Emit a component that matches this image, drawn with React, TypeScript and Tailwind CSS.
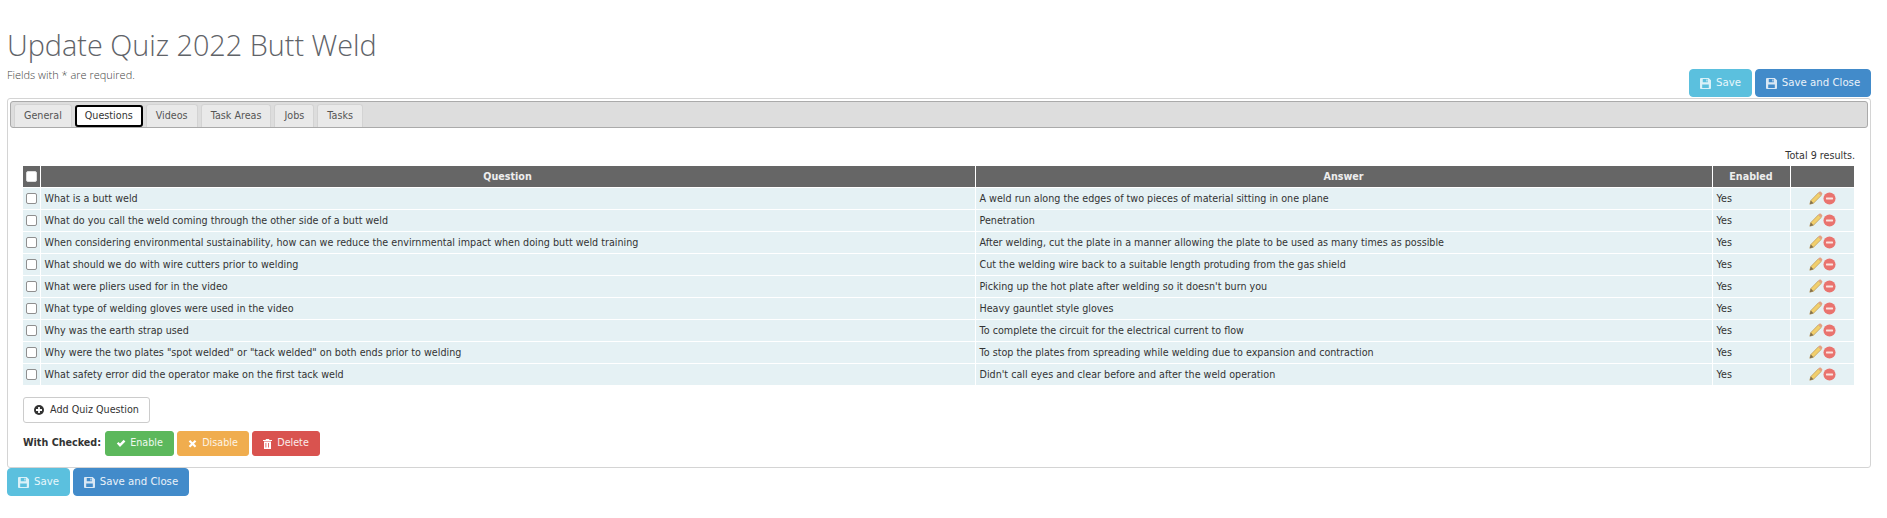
import React from "react";

const questions = [
  ["What is a butt weld", "A weld run along the edges of two pieces of material sitting in one plane"],
  ["What do you call the weld coming through the other side of a butt weld", "Penetration"],
  ["When considering environmental sustainability, how can we reduce the envirnmental impact when doing butt weld training", "After welding, cut the plate in a manner allowing the plate to be used as many times as possible"],
  ["What should we do with wire cutters prior to welding", "Cut the welding wire back to a suitable length protuding from the gas shield"],
  ["What were pliers used for in the video", "Picking up the hot plate after welding so it doesn't burn you"],
  ["What type of welding gloves were used in the video", "Heavy gauntlet style gloves"],
  ["Why was the earth strap used", "To complete the circuit for the electrical current to flow"],
  ['Why were the two plates "spot welded" or "tack welded" on both ends prior to welding', "To stop the plates from spreading while welding due to expansion and contraction"],
  ["What safety error did the operator make on the first tack weld", "Didn't call eyes and clear before and after the weld operation"],
];

const tabs = ["General", "Questions", "Videos", "Task Areas", "Jobs", "Tasks"];

const SaveIcon = () => (
  <svg width="11" height="11" viewBox="0 0 12 12" className="shrink-0 opacity-90">
    <path
      fillRule="evenodd"
      fill="currentColor"
      d="M1 0h8.5L12 2.5V11a1 1 0 0 1-1 1H1a1 1 0 0 1-1-1V1a1 1 0 0 1 1-1zM3 1.2v3.3h5.6V1.2H3zm3.9.5h1.2v2.2H6.9V1.7zM2.4 7v3.8h7.2V7H2.4z"
    />
  </svg>
);

const SaveButtons = () => (
  <div className="flex gap-[3px]">
    <button className="flex h-[28px] w-[63px] items-center justify-center gap-[5px] rounded-[4px] border border-[#5bc0de] bg-[#5bc0de] text-[10.2px] text-[#e8f7fb]">
      <SaveIcon />
      Save
    </button>
    <button className="flex h-[28px] w-[116px] items-center justify-center gap-[5px] rounded-[4px] border border-[#428bca] bg-[#428bca] text-[10.2px] text-[#eaf2f9]">
      <SaveIcon />
      Save and Close
    </button>
  </div>
);

const EditIcon = () => (
  <svg width="14" height="14" viewBox="0 0 14 14">
    <path d="M0.8 13.2l1-3.6 7.6-7.8 2.8 2.7-7.7 7.7z" fill="#f1cf6c" stroke="#b8975a" strokeWidth="0.7" />
    <path d="M9.4 1.8l1-1c.5-.4 1-.4 1.500 0l1.200 1.200c.4.5.4 1 0 1.500l-.9 1z" fill="#e3a182" />
    <path d="M0.8 13.2l1-3.6 2.700 2.600z" fill="#80704f" />
  </svg>
);

const DeleteIcon = () => (
  <svg width="13" height="13" viewBox="0 0 14 14">
    <circle cx="7" cy="7" r="6.500" fill="#e9736e" />
    <rect x="3.200" y="5.900" width="7.600" height="2.200" rx="0.500" fill="#fbe3e0" />
  </svg>
);

const Checkbox = ({ filled }: { filled?: boolean }) => (
  <span
    className={`mx-auto block h-[11px] w-[11px] rounded-[2px] border ${
      filled ? "border-[#ddd] bg-white" : "border-[#8f8f8f] bg-white"
    }`}
  />
);

export default function App() {
  return (
    <div className="min-h-[518px] bg-white pt-[28px] pr-[16px] pl-[7px] font-['DejaVu_Sans',sans-serif] text-[#333]">
      <div className="flex items-end justify-between">
        <div className="pb-[16px]">
          <h1 className="font-['Open_Sans',sans-serif] text-[28.8px] leading-[33px] font-light text-[#5f6368]">
            Update Quiz 2022 Butt Weld
          </h1>
          <p className="mt-[7px] font-['Open_Sans',sans-serif] text-[11px] leading-[14px] font-light text-[#444]">
            Fields with * are required.
          </p>
        </div>
        <div className="pb-[1px]">
          <SaveButtons />
        </div>
      </div>

      <div className="h-[370px] rounded-[3px] border border-[#d4d4d4] px-[2px] pt-[2px]">
        <div className="flex h-[27px] items-end gap-[3px] rounded-[3px] border border-[#aaa] bg-[#dddddd] pl-[3px]">
          {tabs.map((t) => (
            <div
              key={t}
              className={
                t === "Questions"
                  ? "flex h-[22px] items-center rounded-[3px] border-2 border-black bg-white px-[8px] text-[9.6px] text-[#333]"
                  : "flex h-[23px] items-center rounded-t-[3px] border border-b-0 border-[#d3d3d3] bg-[#e9e9e9] px-[9px] text-[9.6px] text-[#555]"
              }
            >
              {t}
            </div>
          ))}
        </div>

        <div className="px-[13px]">
          <div className="pt-[21px] pb-[4px] text-right text-[9.6px] leading-[13px] text-[#333]">Total 9 results.</div>
          <table className="w-[1831px] table-fixed border-collapse text-[9.6px]">
            <colgroup>
              <col className="w-[17px]" />
              <col className="w-[935px]" />
              <col className="w-[737px]" />
              <col className="w-[78px]" />
              <col className="w-[64px]" />
            </colgroup>
            <thead>
              <tr className="h-[21px] bg-[#666666] font-bold text-[#eee]">
                <th className="border-r border-white">
                  <Checkbox filled />
                </th>
                <th className="border-r border-white pt-[1px]">Question</th>
                <th className="border-r border-white pt-[1px]">Answer</th>
                <th className="border-r border-white pt-[1px]">Enabled</th>
                <th />
              </tr>
            </thead>
            <tbody>
              {questions.map(([q, a]) => (
                <tr key={q} className="h-[22px] border-t border-white bg-[#e5f1f4] text-[#333]">
                  <td className="border-r border-white">
                    <Checkbox />
                  </td>
                  <td className="truncate border-r border-white pt-[2px] pl-[4px]">{q}</td>
                  <td className="truncate border-r border-white pt-[2px] pl-[4px]">{a}</td>
                  <td className="border-r border-white pt-[2px] pl-[4px]">Yes</td>
                  <td>
                    <div className="flex items-center justify-center">
                      <EditIcon />
                      <DeleteIcon />
                    </div>
                  </td>
                </tr>
              ))}
            </tbody>
          </table>

          <button className="mt-[12px] flex h-[26px] w-[127px] items-center justify-center gap-[6px] rounded-[3px] border border-[#ccc] bg-white text-[9.6px] text-[#333]">
            <svg width="10" height="10" viewBox="0 0 10 10">
              <circle cx="5" cy="5" r="5" fill="#333" />
              <path d="M4.100 2h1.800v2.100H8v1.800H5.900V8H4.100V5.900H2V4.100h2.100z" fill="#fff" />
            </svg>
            Add Quiz Question
          </button>

          <div className="mt-[8px] flex items-center gap-[3px]">
            <span className="mr-[1px] text-[9.6px] font-bold text-[#333]">With Checked:</span>
            <button className="flex h-[25px] w-[69px] items-center justify-center gap-[4px] rounded-[3px] border border-[#5cb85c] bg-[#5cb85c] text-[9.6px] text-[#eef8ee]">
              <svg width="10" height="9" viewBox="0 0 10 9">
                <path d="M0.800 4.600l1.700-1.600 1.500 1.600L7.700 0.800 9.400 2.400 4 7.900z" fill="#fff" />
              </svg>
              Enable
            </button>
            <button className="flex h-[25px] w-[72px] items-center justify-center gap-[5px] rounded-[3px] border border-[#f0ad4e] bg-[#f0ad4e] text-[9.6px] text-[#fdf4e6]">
              <svg width="9" height="9" viewBox="0 0 9 9">
                <path d="M2.200 1l2.300 2.200L6.800 1 8.300 2.500 6 4.700l2.300 2.200-1.500 1.500-2.300-2.200-2.300 2.200L.7 6.900 3 4.700.7 2.500z" fill="#fff" />
              </svg>
              Disable
            </button>
            <button className="flex h-[25px] w-[68px] items-center justify-center gap-[5px] rounded-[3px] border border-[#d9534f] bg-[#d9534f] text-[9.6px] text-[#fbeceb]">
              <svg width="9" height="10" viewBox="0 0 9 10">
                <path
                  fillRule="evenodd"
                  d="M3 0h3l.5 1H9v1H0V1h2.500zM1 2.600h7V10H1zM2.500 4v4.500h.8V4zm2.600 0v4.500h.8V4z"
                  fill="#fff"
                />
              </svg>
              Delete
            </button>
          </div>
        </div>
      </div>

      <SaveButtons />
    </div>
  );
}
